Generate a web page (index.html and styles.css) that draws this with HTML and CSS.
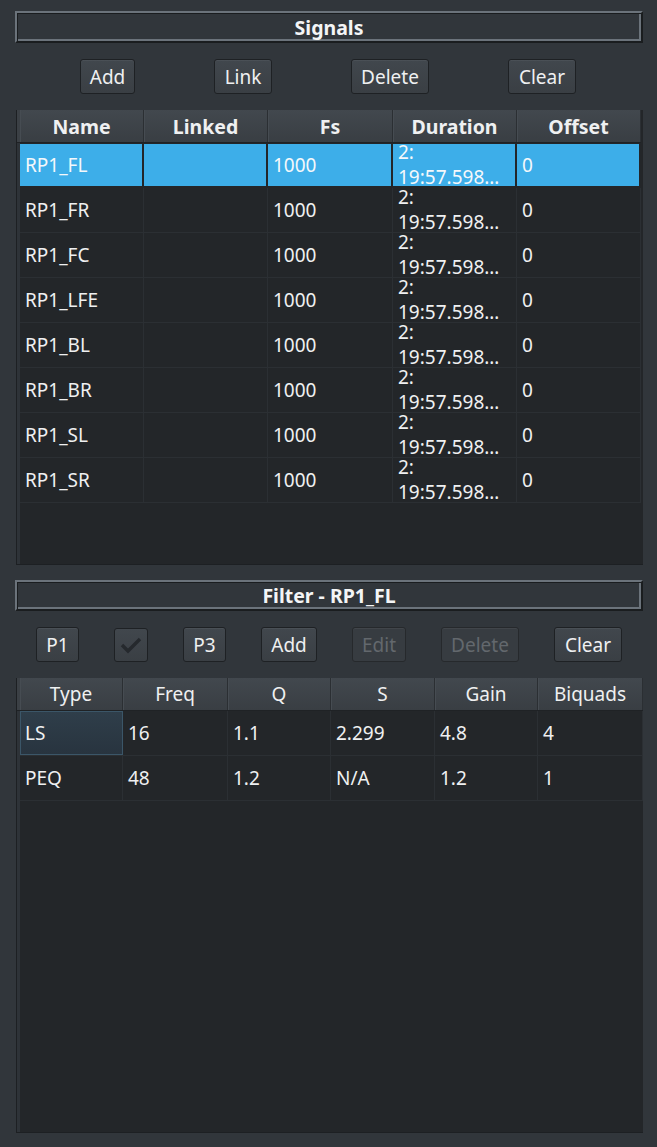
FILE: index.html
```html
<!DOCTYPE html>
<html>
<head>
<meta charset="utf-8">
<link rel="stylesheet" href="styles.css">
</head>
<body>
<div class="page">
  <div class="group-title">Signals</div>
  <div class="btn-row btn-row-signals">
    <button class="btn w-add">Add</button>
    <button class="btn w-link">Link</button>
    <button class="btn w-delete">Delete</button>
    <button class="btn w-clear">Clear</button>
  </div>

  <div class="table table-signals">
    <div class="grid sig-cols head">
      <div class="hcell bold">Name</div>
      <div class="hcell bold">Linked</div>
      <div class="hcell bold">Fs</div>
      <div class="hcell bold">Duration</div>
      <div class="hcell bold">Offset</div>
    </div>
    <div class="grid sig-cols row selected">
      <div class="cell">RP1_FL</div><div class="cell"></div><div class="cell">1000</div><div class="cell dur">2:<br>19:57.598…</div><div class="cell">0</div>
    </div>
    <div class="grid sig-cols row">
      <div class="cell">RP1_FR</div><div class="cell"></div><div class="cell">1000</div><div class="cell dur">2:<br>19:57.598…</div><div class="cell">0</div>
    </div>
    <div class="grid sig-cols row">
      <div class="cell">RP1_FC</div><div class="cell"></div><div class="cell">1000</div><div class="cell dur">2:<br>19:57.598…</div><div class="cell">0</div>
    </div>
    <div class="grid sig-cols row">
      <div class="cell">RP1_LFE</div><div class="cell"></div><div class="cell">1000</div><div class="cell dur">2:<br>19:57.598…</div><div class="cell">0</div>
    </div>
    <div class="grid sig-cols row">
      <div class="cell">RP1_BL</div><div class="cell"></div><div class="cell">1000</div><div class="cell dur">2:<br>19:57.598…</div><div class="cell">0</div>
    </div>
    <div class="grid sig-cols row">
      <div class="cell">RP1_BR</div><div class="cell"></div><div class="cell">1000</div><div class="cell dur">2:<br>19:57.598…</div><div class="cell">0</div>
    </div>
    <div class="grid sig-cols row">
      <div class="cell">RP1_SL</div><div class="cell"></div><div class="cell">1000</div><div class="cell dur">2:<br>19:57.598…</div><div class="cell">0</div>
    </div>
    <div class="grid sig-cols row">
      <div class="cell">RP1_SR</div><div class="cell"></div><div class="cell">1000</div><div class="cell dur">2:<br>19:57.598…</div><div class="cell">0</div>
    </div>
  </div>

  <div class="group-title title-filter">Filter - RP1_FL</div>
  <div class="btn-row btn-row-filter">
    <button class="btn w-p1">P1</button>
    <div class="check">
      <svg width="22" height="18" viewBox="0 0 22 18"><polyline points="2,9 8,15 20,3" fill="none" stroke="#25292d" stroke-width="3.4"/></svg>
    </div>
    <button class="btn w-p3">P3</button>
    <button class="btn w-fadd">Add</button>
    <button class="btn disabled w-edit">Edit</button>
    <button class="btn disabled w-fdelete">Delete</button>
    <button class="btn w-fclear">Clear</button>
  </div>

  <div class="table table-filter">
    <div class="grid flt-cols head">
      <div class="hcell">Type</div>
      <div class="hcell">Freq</div>
      <div class="hcell">Q</div>
      <div class="hcell">S</div>
      <div class="hcell">Gain</div>
      <div class="hcell">Biquads</div>
    </div>
    <div class="grid flt-cols row frow">
      <div class="cell focus">LS</div><div class="cell">16</div><div class="cell">1.1</div><div class="cell">2.299</div><div class="cell">4.8</div><div class="cell">4</div>
    </div>
    <div class="grid flt-cols row frow">
      <div class="cell">PEQ</div><div class="cell">48</div><div class="cell">1.2</div><div class="cell">N/A</div><div class="cell">1.2</div><div class="cell">1</div>
    </div>
  </div>
</div>
</body>
</html>
```

FILE: styles.css
```css
* { box-sizing: border-box; }
html, body {
  margin: 0;
  padding: 0;
  background: #31363b;
  width: 657px;
  height: 1147px;
  overflow: hidden;
}
body {
  font-family: "Noto Sans", "Open Sans", sans-serif;
  font-size: 19px;
  color: #eff0f1;
}
.page {
  padding: 11px 14px 0 15px;
  display: flex;
  flex-direction: column;
}
.group-title {
  height: 32px;
  width: 628px;
  display: flex;
  align-items: center;
  justify-content: center;
  font-weight: bold;
  font-size: 19.5px;
  color: #f4f5f6;
  border: 2px solid;
  border-color: #6b737b #1a1d1f #1a1d1f #6b737b;
  box-shadow: inset 1px 1px 0 #1a1d1f, inset -2px -2px 0 #6b737b;
  background: #31363b;
}
.title-filter { margin-top: 15px; height: 31px; }

.btn-row {
  display: flex;
  align-items: center;
}
.btn-row-signals { margin-top: 16px; padding-left: 65px; gap: 79px; height: 35px; }
.btn-row-filter { margin-top: 16px; padding-left: 21px; gap: 35px; height: 35px; }

.btn {
  height: 35px;
  font-family: inherit;
  font-size: 19px;
  color: #eff0f1;
  background: linear-gradient(#41474d, #3a3f44);
  border: 1px solid #1e2124;
  border-radius: 3px;
  padding: 0;
  box-shadow: inset 0 1px 0 rgba(255,255,255,0.05);
}
.btn.disabled {
  color: #63686d;
  background: #373c41;
  border-color: #26292c;
}
.w-add { width: 55px; }
.w-link { width: 58px; }
.w-delete { width: 78px; }
.w-clear { width: 68px; }
.w-p1 { width: 43px; }
.w-p3 { width: 43px; }
.w-fadd { width: 56px; }
.w-edit { width: 54px; }
.w-fdelete { width: 78px; }
.w-fclear { width: 68px; }

.check {
  width: 34px;
  height: 34px;
  background: linear-gradient(#41474d, #3a3f44);
  border: 1px solid #1e2124;
  border-radius: 3px;
  display: flex;
  align-items: center;
  justify-content: center;
}

.table {
  margin-left: 1px;
  width: 627px;
  background: #232629;
  border-left: 1px solid #1d2023;
  border-bottom: 1px solid #1d2023;
  padding-left: 3px;
  box-shadow: inset 3px 0 0 #2e3338;
  overflow: hidden;
}
.table-signals { margin-top: 16px; height: 455px; padding-right: 2px; }
.table-filter { margin-top: 16px; height: 455px; }

.grid { display: grid; }
.sig-cols { grid-template-columns: 124px 124px 125px 124px 124px; }
.flt-cols { grid-template-columns: 103px 105px 103px 104px 103px 105px; }

.head {
  height: 33px;
  border-bottom: 1px solid #1f2225;
  margin-left: -3px;
  padding-left: 3px;
  background: #3b4045;
}
.hcell {
  display: flex;
  align-items: center;
  justify-content: center;
  background: linear-gradient(#42484e, #393e43);
  border-right: 1px solid #2b2f33;
  box-shadow: inset 1px 0 0 #464c52;
  color: #eff0f1;
  white-space: nowrap;
}
.hcell.bold { font-weight: bold; font-size: 19.5px; }

.row {
  height: 45px;
  border-bottom: 1px solid #2b2f33;
}
.cell {
  display: flex;
  align-items: center;
  padding: 0 5px;
  border-right: 1px solid #2b2f33;
  overflow: hidden;
  white-space: nowrap;
  line-height: 25px;
}
.cell.dur { white-space: normal; }
.row.selected { border-bottom-color: #232629; }
.row.selected .cell {
  background: #3daee9;
  border: 1px solid #232629;
  border-left-width: 0;
  border-right-width: 2px;
  color: #f4f8fb;
}
.cell.focus {
  background: linear-gradient(#2f3e4a, #28343f);
  border: 1px solid #3b5668;
  padding-left: 4px;
}
```
